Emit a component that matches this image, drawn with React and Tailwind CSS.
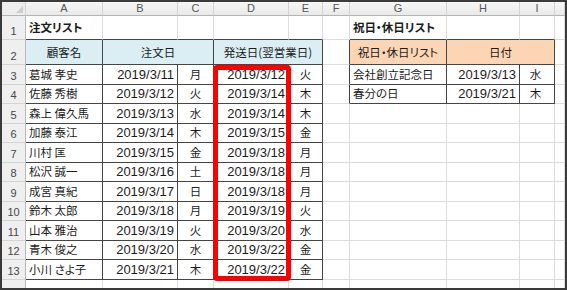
const B = {
  gg: "border-r border-b border-r-[#dcdcdc] border-b-[#dcdcdc]",
  dg: "border-r border-b border-r-[#454545] border-b-[#dcdcdc]",
  gd: "border-r border-b border-r-[#dcdcdc] border-b-[#454545]",
  dd: "border-r border-b border-r-[#454545] border-b-[#454545]",
};

const jp = "font-['Noto_Sans_CJK_JP',sans-serif] text-[11.5px] [font-feature-settings:'palt']";
const num = "font-['Liberation_Sans','Noto_Sans_CJK_JP',sans-serif] text-[13px]";

const orders = [
  ["葛城 孝史", "2019/3/11", "月", "2019/3/12", "火"],
  ["佐藤 秀樹", "2019/3/12", "火", "2019/3/14", "木"],
  ["森上 偉久馬", "2019/3/13", "水", "2019/3/14", "木"],
  ["加藤 泰江", "2019/3/14", "木", "2019/3/15", "金"],
  ["川村 匡", "2019/3/15", "金", "2019/3/18", "月"],
  ["松沢 誠一", "2019/3/16", "土", "2019/3/18", "月"],
  ["成宮 真紀", "2019/3/17", "日", "2019/3/18", "月"],
  ["鈴木 太郎", "2019/3/18", "月", "2019/3/19", "火"],
  ["山本 雅治", "2019/3/19", "火", "2019/3/20", "水"],
  ["青木 俊之", "2019/3/20", "水", "2019/3/22", "金"],
  ["小川 さよ子", "2019/3/21", "木", "2019/3/22", "金"],
];

const holidays = [
  ["会社創立記念日", "2019/3/13", "水"],
  ["春分の日", "2019/3/21", "木"],
];

function Cell({ b = "gg", className = "", children }) {
  return (
    <div className={`flex min-w-0 items-center overflow-hidden whitespace-nowrap text-[#1c1c1c] ${B[b]} ${className}`}>
      {children}
    </div>
  );
}

function RowHead({ n }) {
  return (
    <div className="flex items-end justify-center border-r border-b border-r-[#b8b8b8] border-b-[#d4d4d4] bg-[#efefef] pb-[1px] font-['Liberation_Sans',sans-serif] text-[11px] leading-[13px] text-[#474747]">
      {n}
    </div>
  );
}

function ColHead({ label }) {
  return (
    <div className="flex items-center justify-center border-r border-b border-r-[#d2d2d2] border-b-[#b4b4b4] bg-gradient-to-b from-[#f7f7f7] to-[#e9e9e9] font-['Liberation_Sans',sans-serif] text-[11px] leading-none text-[#555]">
      {label}
    </div>
  );
}

export default function App() {
  return (
    <div className="h-[290px] w-[567px] overflow-hidden border-2 border-[#3a3a3a] bg-white">
      <div className="relative">
        <div className="grid grid-cols-[24px_77px_75px_36px_75px_34px_27px_97px_73px_35px_1fr] grid-rows-[14px_24px_25px_20px_19px_20px_19px_20px_19px_20px_19px_20px_19px_20px_20px]">
          {/* column headers */}
          <div className="flex items-end justify-end border-r border-b border-r-[#d2d2d2] border-b-[#b4b4b4] bg-[#ededed] p-[2px]">
            <svg width="7" height="7" viewBox="0 0 7 7">
              <polygon points="7,0 7,7 0,7" fill="#cdcdcd" />
            </svg>
          </div>
          {["A", "B", "C", "D", "E", "F", "G", "H", "I", ""].map((l, i) => (
            <ColHead key={i} label={l} />
          ))}

          {/* row 1 */}
          <RowHead n={1} />
          <Cell b="gd" className={`${jp} pl-[3px] font-bold`}>注文リスト</Cell>
          <Cell b="gd" />
          <Cell b="gd" />
          <Cell b="gd" />
          <Cell b="gd" />
          <Cell b="gg" />
          <Cell b="gd" className={`${jp} pl-[3px] font-bold`}>祝日・休日リスト</Cell>
          <Cell b="gd" />
          <Cell b="gd" />
          <Cell b="gg" />

          {/* row 2 */}
          <RowHead n={2} />
          <Cell b="dd" className={`${jp} justify-center bg-[#daeef3] pt-[2px]`}>顧客名</Cell>
          <Cell b="dd" className={`${jp} col-span-2 justify-center bg-[#daeef3] pt-[2px]`}>注文日</Cell>
          <Cell b="dd" className={`${jp} col-span-2 justify-center bg-[#daeef3] pt-[2px]`}>発送日(翌営業日)</Cell>
          <Cell b="dg" />
          <Cell b="dd" className={`${jp} justify-center bg-[#fcd5b4] pt-[2px]`}>祝日・休日リスト</Cell>
          <Cell b="dd" className={`${jp} col-span-2 justify-center bg-[#fcd5b4] pt-[2px]`}>日付</Cell>
          <Cell b="gg" />

          {/* rows 3-13 */}
          {orders.map((o, i) => {
            const h = holidays[i];
            return [
              <RowHead key={`r${i}`} n={i + 3} />,
              <Cell key={`a${i}`} b="dd" className={`${jp} pl-[3px]`}>{o[0]}</Cell>,
              <Cell key={`b${i}`} b="dd" className={`${num} justify-end pr-[3px]`}>{o[1]}</Cell>,
              <Cell key={`c${i}`} b="dd" className={`${jp} justify-center`}>{o[2]}</Cell>,
              <Cell key={`d${i}`} b="dd" className={`${num} justify-end pr-[3px]`}>{o[3]}</Cell>,
              <Cell key={`e${i}`} b="dd" className={`${jp} justify-center`}>{o[4]}</Cell>,
              <Cell key={`f${i}`} b={h ? "dg" : "gg"} />,
              <Cell key={`g${i}`} b={h ? "dd" : "gg"} className={`${jp} pl-[3px]`}>{h && h[0]}</Cell>,
              <Cell key={`h${i}`} b={h ? "dd" : "gg"} className={`${num} justify-end pr-[3px]`}>{h && h[1]}</Cell>,
              <Cell key={`i${i}`} b={h ? "dd" : "gg"} className={`${jp} justify-center pr-[3px]`}>{h && h[2]}</Cell>,
              <Cell key={`j${i}`} b="gg" />,
            ];
          })}

          {/* row 14, mostly cut off by the frame */}
          <RowHead n="" />
          {Array.from({ length: 10 }).map((_, i) => (
            <Cell key={`z${i}`} b="gg" />
          ))}
        </div>

        {/* highlight box */}
        <div className="pointer-events-none absolute left-[211px] top-[63px] h-[216px] w-[78px] rounded-[4px] border-[5px] border-[#ff0000]" />
      </div>
    </div>
  );
}
